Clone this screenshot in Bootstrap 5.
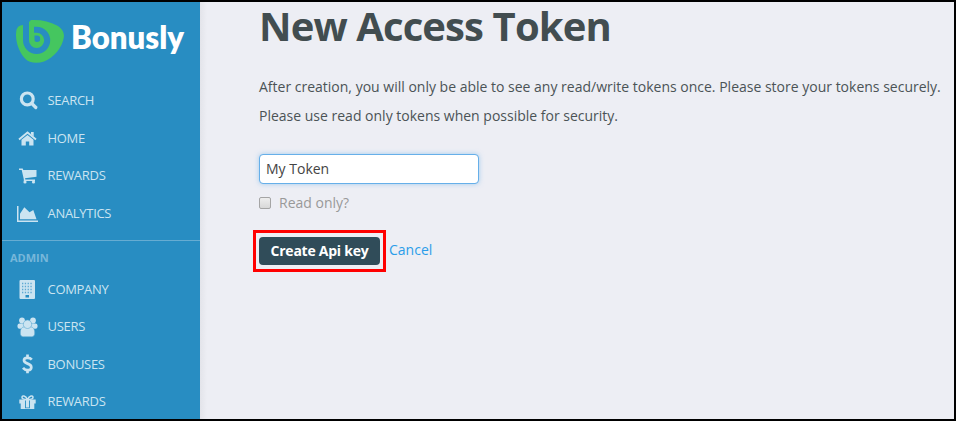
<!DOCTYPE html>
<html lang="en">
<head>
<meta charset="utf-8">
<meta name="viewport" content="width=device-width, initial-scale=1">
<title>New Access Token</title>
<link rel="stylesheet" href="https://cdn.jsdelivr.net/npm/bootstrap@5.3.0/dist/css/bootstrap.min.css">
<style>
body{font-family:"Open Sans","Noto Sans",sans-serif;font-size:14px;color:#4b5356;background:#edeef4}
.frame{height:421px;border:2px solid #000;background:#edeef4}
.sidebar{width:198px;background:#288dc2}
.shade{width:7px;background:linear-gradient(90deg,#e3e4ea,#edeef4)}
.brand{height:79px;padding:14px 0 0 14px}
.side-link{height:37.600px;padding:0 0 0 11px;color:#cbe4f1;font-size:13px;letter-spacing:-.3px;text-decoration:none}
.side-link svg{width:30px;height:24px;fill:#cbe4f1;margin-right:4.500px}
.brand + .side-link{height:38.600px}
.side-title{height:30.500px;margin-top:7.600px;padding:8px 0 0 8px;font-size:11px;line-height:17px;color:#77b7da;border-top:1px solid #66acd2}
h1{font-size:40px;line-height:48px;letter-spacing:-.88px;margin:0 0 22px;color:#424d50}
.copy{line-height:29px;margin:0}
.token-input{width:220px;height:30px;margin-top:24px;padding:0 6px 2px;font-size:14px;color:#444;border:1px solid #66afe9;border-radius:4px;box-shadow:0 0 5px rgba(102,175,233,.55)}
.token-input:focus{border-color:#66afe9;box-shadow:0 0 5px rgba(102,175,233,.55)}
.read-only{height:20px;margin-top:8px;color:#999;gap:8px}
.tick{appearance:none;width:12px;height:12px;margin:2px 0 0;border:1px solid #a5a5a5;border-radius:2px;background:linear-gradient(#eee,#d8d8d8)}
.outline{width:133px;height:42px;margin:18px 0 0 -6px;border:3px solid #f00}
.btn-key{width:121px;height:28px;padding:0 0 1px;font-size:14px;line-height:27px;letter-spacing:-.25px;border:0;border-radius:4px;background:#304c59;color:#fff}
.cancel{color:#2b9de9;margin:27px 0 0 3px}
</style>
</head>
<body>
<div class="frame d-flex overflow-hidden">
  <nav class="sidebar flex-shrink-0">
    <div class="brand">
      <svg class="d-block" width="172" height="52" viewBox="0 0 172 52">
        <path fill="#45c65f" d="M15 4C25 3.500 34 5.500 41 9.500c5.500 3.200 7.500 7.500 6.800 12C46.500 31 38 42 28 45.500c-7 2.500-15 1.500-19-3C2 35-1 23 .3 15 .8 11 3.500 9.300 7 9l6-3z"/>
        <path fill="none" stroke="#288dc2" stroke-width="6" d="M10 2v22.300A10.600 10.600 0 1 0 20.600 13.700H18"/>
        <path fill="#288dc2" d="M18.500 19.500H21a3.200 3.200 0 0 1 0 6.400c-2 0-2.500-1-2.500-2.500z"/>
        <text x="55" y="33" font-family="Lato,sans-serif" font-weight="800" font-size="32" textLength="113" lengthAdjust="spacingAndGlyphs" fill="#fff">Bonusly</text>
      </svg>
    </div>
    <a class="side-link d-flex align-items-center" href="#"><svg viewBox="0 0 30 24"><path fill="none" stroke="#cbe4f1" stroke-width="3.200" d="M14.300 5a5.900 5.900 0 1 0 0 11.800 5.900 5.900 0 0 0 0-11.800z"/><path stroke="#cbe4f1" stroke-width="3.200" stroke-linecap="round" d="m18.800 15.500 4 4"/></svg>SEARCH</a>
    <a class="side-link d-flex align-items-center" href="#"><svg viewBox="0 0 30 24"><path d="M8.500 13.800 14.500 9l6 4.800v5.700h-4.300v-4h-3.400v4H8.500z"/><path fill="none" stroke="#cbe4f1" stroke-width="1.900" d="m6 13.400 8.500-7 8.500 7"/><path d="M18 6h2.700v4.500L18 8.500z"/></svg>HOME</a>
    <a class="side-link d-flex align-items-center" href="#"><svg viewBox="0 0 30 24"><path d="M6 4.500h3.700l.6 1.500H23.500v6.800L12 14.200l.3 1.300H22V17H10.800V15.200L8.700 6H6z"/><circle cx="12" cy="18" r="1.600"/><circle cx="20.500" cy="18" r="1.600"/></svg>REWARDS</a>
    <a class="side-link d-flex align-items-center" href="#"><svg viewBox="0 0 30 24"><path d="M4 4h1.500v14.500H25V20H4z"/><path d="M7 17.300v-5.500l4.300-6.500 5.200 5L20.300 8 23.500 17.300z"/></svg>ANALYTICS</a>
    <div class="side-title fw-bold">ADMIN</div>
    <a class="side-link d-flex align-items-center" href="#"><svg viewBox="0 0 30 24"><rect x="6.500" y="3" width="15.500" height="19" rx="1"/><path fill="none" stroke="#5da9d2" stroke-width="1.300" stroke-dasharray="1.300 1.500" d="M9 6.500h11M9 9.500h11M9 12.500h11M9 15.500h11"/><path fill="#288dc2" d="M12.500 18h3.500v2.500h-3.500z"/></svg>COMPANY</a>
    <a class="side-link d-flex align-items-center" href="#"><svg viewBox="0 0 30 24"><circle cx="9" cy="5.500" r="2.900"/><circle cx="20" cy="5.500" r="2.900"/><rect x="4.500" y="8.500" width="20" height="5.300" rx="2"/><g stroke="#5da9d2" stroke-width=".6"><path d="M7.300 18c0-4 1.400-6 4-6h6.400c2.600 0 4 2 4 6 0 2.600-1.200 3.700-3 3.700h-8.400c-1.800 0-3-1.100-3-3.700z"/><circle cx="14.500" cy="9.300" r="4.200"/></g></svg>USERS</a>
    <a class="side-link d-flex align-items-center" href="#"><svg viewBox="0 0 30 24"><path fill="none" stroke="#cbe4f1" stroke-width="2.700" d="M18.800 7.600C16.500 5 11 5.200 11 8.300c0 4.200 7.300 2.400 7.300 6.900 0 3.700-5.500 3.900-8.300.6M14.500 2.500v3.300M14.500 17.500v3.800"/></svg>BONUSES</a>
    <a class="side-link d-flex align-items-center" href="#"><svg viewBox="0 0 30 24"><path d="M6.300 9.500h16.400v4H6.300z"/><path d="M7.700 13h13.600v6H7.700z"/><path fill="none" stroke="#cbe4f1" stroke-width="1.500" d="M14.500 9.500C12.500 5 9 5.200 9 7.500c0 1.300 1 2 5.500 2 4.500 0 5.500-.7 5.500-2 0-2.300-3.500-2.500-5.500 2z"/><path fill="#288dc2" d="M12 10.500h.9v7H16v-7h.9v7.700H12z"/></svg>REWARDS</a>
  </nav>
  <div class="shade flex-shrink-0"></div>
  <main class="flex-grow-1 ps-5">
    <form class="ms-1">
    <h1 class="fw-bold text-nowrap">New Access Token</h1>
    <p class="copy text-nowrap">After creation, you will only be able to see any read/write tokens once. Please store your tokens securely.</p>
    <p class="copy text-nowrap">Please use read only tokens when possible for security.</p>
    <input class="form-control token-input" type="text" value="My Token" aria-label="Token name">
    <label class="read-only d-flex align-items-center"><input class="tick" type="checkbox">Read only?</label>
    <div class="d-flex align-items-start">
      <div class="outline d-flex align-items-center justify-content-center"><button type="button" class="btn btn-key fw-bold">Create Api key</button></div>
      <a class="cancel text-decoration-none" href="#">Cancel</a>
    </div>
    </form>
  </main>
</div>
<script src="https://cdn.jsdelivr.net/npm/bootstrap@5.3.0/dist/js/bootstrap.bundle.min.js"></script>
</body>
</html>
